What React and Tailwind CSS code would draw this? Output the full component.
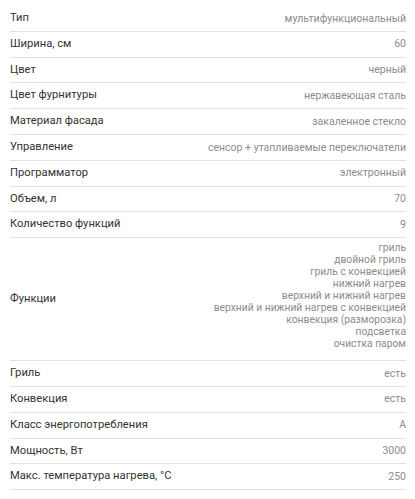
const SPECS_TOP = [
  ['Тип', 'мультифункциональный'],
  ['Ширина, см', '60'],
  ['Цвет', 'черный'],
  ['Цвет фурнитуры', 'нержавеющая сталь'],
  ['Материал фасада', 'закаленное стекло'],
  ['Управление', 'сенсор + утапливаемые переключатели'],
  ['Программатор', 'электронный'],
  ['Объем, л', '70'],
  ['Количество функций', '9'],
];

const FUNCTIONS = [
  'гриль',
  'двойной гриль',
  'гриль с конвекцией',
  'нижний нагрев',
  'верхний и нижний нагрев',
  'верхний и нижний нагрев с конвекцией',
  'конвекция (разморозка)',
  'подсветка',
  'очистка паром',
];

const SPECS_BOTTOM = [
  ['Гриль', 'есть'],
  ['Конвекция', 'есть'],
  ['Класс энергопотребления', 'A'],
  ['Мощность, Вт', '3000'],
  ['Макс. температура нагрева, °C', '250'],
];

function SpecRow({ label, value }) {
  return (
    <div className="flex h-[25.8px] items-center justify-between border-b border-[#e2e2e2]">
      <span className="text-[11.2px] text-[#333]">{label}</span>
      <span className="text-[10.5px] text-[#8c8c8c]">{value}</span>
    </div>
  );
}

export default function App() {
  return (
    <div
      className="min-h-[499px] bg-white pt-[6px]"
      style={{ fontFamily: 'Roboto, "Noto Sans", sans-serif' }}
    >
      <div className="ml-[10px] w-[396px]">
        {SPECS_TOP.map(([label, value]) => (
          <SpecRow key={label} label={label} value={value} />
        ))}

        <div className="flex items-center justify-between border-b border-[#e2e2e2]">
          <span className="text-[11.2px] text-[#333]">Функции</span>
          <div className="flex flex-col items-end pt-[4px] pb-[10px] text-[10.3px] leading-[12px] text-[#8c8c8c]">
            {FUNCTIONS.map((f) => (
              <span key={f}>{f}</span>
            ))}
          </div>
        </div>

        {SPECS_BOTTOM.map(([label, value]) => (
          <SpecRow key={label} label={label} value={value} />
        ))}
      </div>
    </div>
  );
}
